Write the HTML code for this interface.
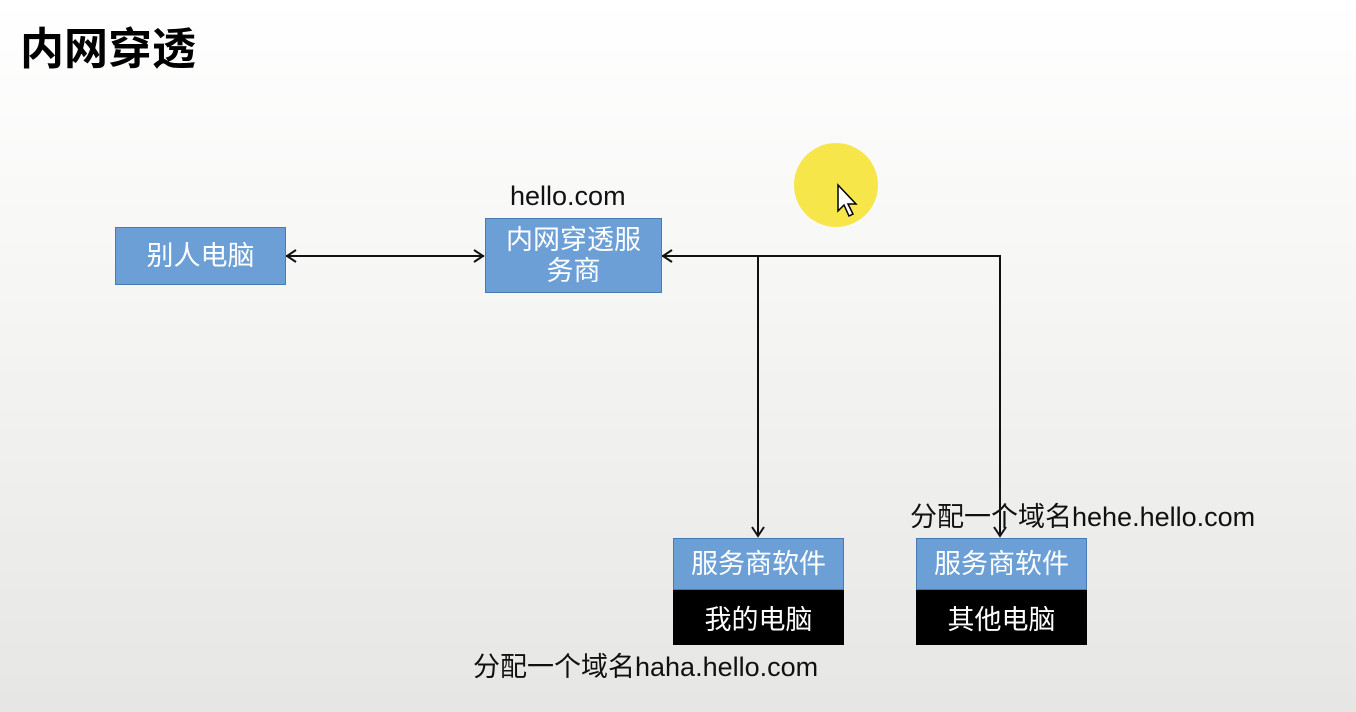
<!DOCTYPE html>
<html><head><meta charset="utf-8"><style>
body{margin:0;width:1356px;height:712px;overflow:hidden;background:linear-gradient(#ffffff 0%,#f6f6f5 40%,#e6e6e5 100%);font-family:"Liberation Sans","Noto Sans CJK SC",sans-serif;position:relative}
.a{position:absolute}
.box{position:absolute;background:#6c9fd6;border:1px solid #4a7ab5;color:#fff;font-size:27px;text-align:center;box-sizing:border-box;display:flex;align-items:center;justify-content:center;line-height:32px}
.blk{position:absolute;background:#000;color:#fff;font-size:27px;text-align:center;box-sizing:border-box;display:flex;align-items:center;justify-content:center}
.t{position:absolute;font-size:27px;color:#111;white-space:nowrap;line-height:32px}
</style></head><body>
<div class="t" style="left:20px;top:24px;font-size:44px;line-height:52px;font-weight:bold;color:#000">内网穿透</div>
<div class="a" style="left:794px;top:143px;width:84px;height:84px;border-radius:50%;background:#f7e64a"></div>
<svg class="a" style="left:0;top:0" width="1356" height="712">
<g stroke="#111" stroke-width="2" fill="none">
<line x1="286" y1="256" x2="484" y2="256"/>
<polyline points="296,250 287,256 296,262"/><polyline points="474,250 483,256 474,262"/>
<line x1="662" y1="256" x2="1001" y2="256"/>
<polyline points="672,250 663,256 672,262"/>
<line x1="758" y1="256" x2="758" y2="536"/>
<polyline points="752,527 758,536 764,527"/>
<line x1="1000" y1="256" x2="1000" y2="536"/>
<polyline points="994,527 1000,536 1006,527"/>
</g>
<path d="M838,185 L838,211 L844,205 L849,216 L853,214 L848,204 L856,204 Z" fill="#fff" stroke="#000" stroke-width="1.5"/>
</svg>
<div class="box" style="left:115px;top:227px;width:171px;height:58px">别人电脑</div>
<div class="t" style="left:510px;top:180px">hello.com</div>
<div class="box" style="left:485px;top:218px;width:177px;height:75px;line-height:31px">内网穿透服<br>务商</div>
<div class="box" style="left:673px;top:538px;width:171px;height:52px">服务商软件</div>
<div class="blk" style="left:673px;top:590px;width:171px;height:55px">我的电脑</div>
<div class="box" style="left:916px;top:538px;width:171px;height:52px">服务商软件</div>
<div class="blk" style="left:916px;top:590px;width:171px;height:55px">其他电脑</div>
<div class="t" style="left:910px;top:501px">分配一个域名hehe.hello.com</div>
<div class="t" style="left:473px;top:651px">分配一个域名haha.hello.com</div>
</body></html>
